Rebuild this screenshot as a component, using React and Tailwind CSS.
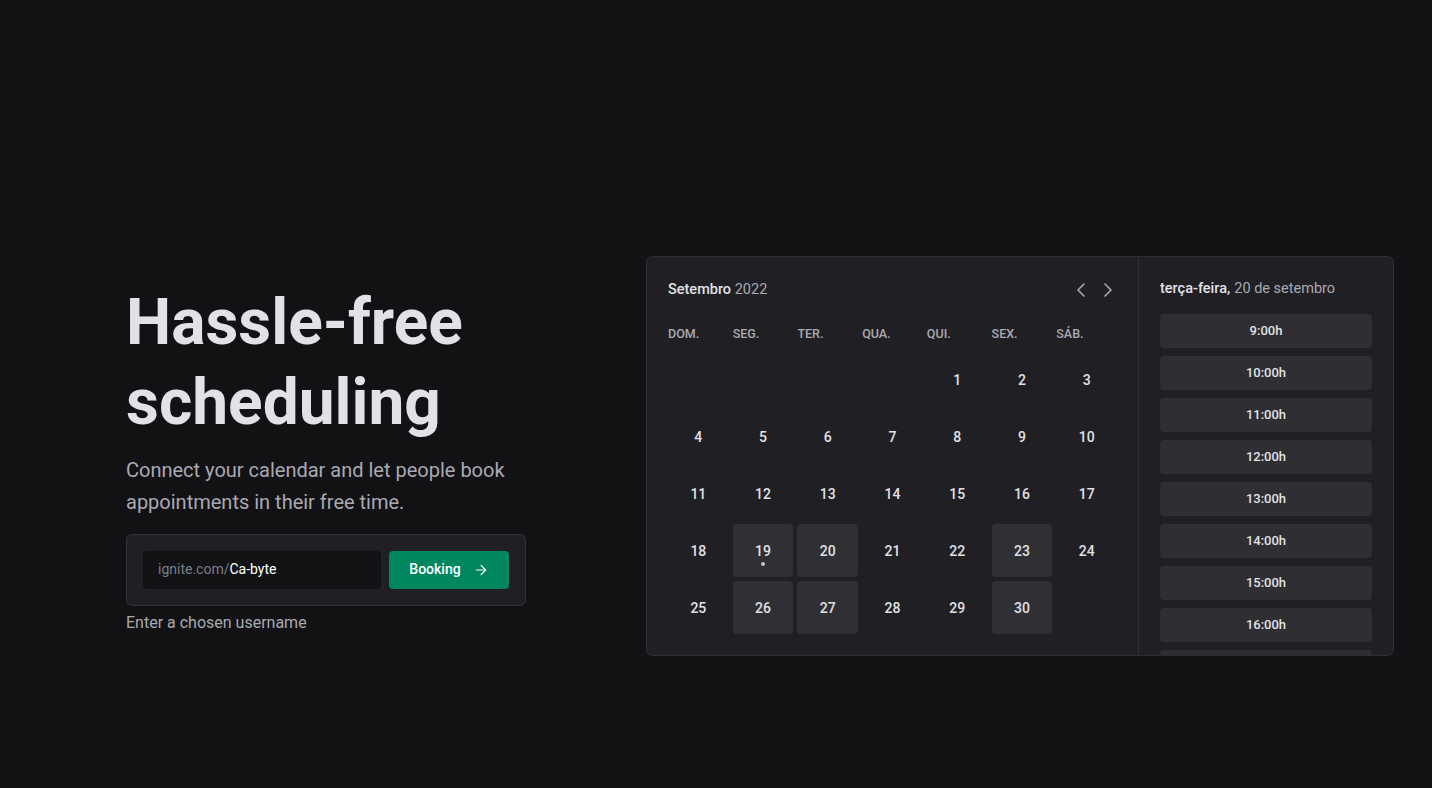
import React from "react";
import { ArrowRight, ChevronLeft, ChevronRight } from "lucide-react";

const weekDays = ["dom.", "seg.", "ter.", "qua.", "qui.", "sex.", "sáb."];

const weeks = [
  [null, null, null, null, 1, 2, 3],
  [4, 5, 6, 7, 8, 9, 10],
  [11, 12, 13, 14, 15, 16, 17],
  [18, 19, 20, 21, 22, 23, 24],
  [25, 26, 27, 28, 29, 30, null],
];

const available = [19, 20, 23, 26, 27, 30];

const hours = ["9:00h", "10:00h", "11:00h", "12:00h", "13:00h", "14:00h", "15:00h", "16:00h"];

function DayCell({ day }) {
  if (day === null) return <div className="h-[53px]" />;
  const active = available.includes(day);
  return (
    <div
      className={
        "relative flex h-[53px] items-center justify-center rounded-[4px] text-[14px] font-medium text-[#e1e1e6] " +
        (active ? "bg-[#2f2f34]" : "")
      }
    >
      <span className="translate-y-[1px]">{day}</span>
      {day === 19 && (
        <span className="absolute left-1/2 top-[38px] h-[4px] w-[4px] -translate-x-1/2 rounded-full bg-[#c4c4cc]" />
      )}
    </div>
  );
}

function Calendar() {
  return (
    <div className="flex h-[400px] w-[748px] shrink-0 overflow-hidden rounded-[6px] border border-[#2c2c31] bg-[#202024]">
      <div className="flex w-[491px] shrink-0 flex-col px-[21px] pt-[21px]">
        <div className="flex h-[24px] items-center justify-between">
          <div className="text-[14.5px] font-medium text-[#e1e1e6]">
            Setembro <span className="font-normal text-[#a9a9b2]">2022</span>
          </div>
          <div className="mr-[-3px] flex items-center gap-[3px] text-[#a9a9b2]">
            <ChevronLeft size={24} strokeWidth={1.6} />
            <ChevronRight size={24} strokeWidth={1.6} />
          </div>
        </div>
        <div className="mt-[22px] grid h-[20px] grid-cols-7 gap-x-1">
          {weekDays.map((d) => (
            <div key={d} className="flex items-center text-[12.5px] font-medium uppercase text-[#a9a9b2]">
              {d}
            </div>
          ))}
        </div>
        <div className="mt-[9px] grid grid-cols-7 gap-1">
          {weeks.flat().map((day, i) => (
            <DayCell key={i} day={day} />
          ))}
        </div>
      </div>
      <div className="flex flex-1 flex-col border-l border-[#2e2e33] pl-[21px] pr-[21px] pt-[21px]">
        <div className="flex h-[24px] items-center text-[14.5px] font-medium text-[#e1e1e6]">
          terça-feira,<span className="ml-1 font-normal text-[#a9a9b2]">20 de setembro</span>
        </div>
        <div className="mt-[11px] flex flex-col gap-2 pt-[3px]">
          {hours.map((h) => (
            <div
              key={h}
              className="flex h-[34px] shrink-0 items-center justify-center rounded-[4px] bg-[#2e2e33] text-[13px] font-medium text-[#e1e1e6]"
            >
              {h}
            </div>
          ))}
          <div className="h-[34px] shrink-0 rounded-[4px] bg-[#2e2e33]" />
        </div>
      </div>
    </div>
  );
}

export default function App() {
  return (
    <div
      className="flex h-[788px] w-full items-center overflow-hidden bg-[#121214] pl-[126px] pt-[124px]"
      style={{ fontFamily: "Roboto, 'Liberation Sans', sans-serif" }}
    >
      <div className="flex items-center gap-10">
        <div className="flex w-[480px] shrink-0 flex-col pt-[5px]">
          <h1 className="text-[64px] font-bold leading-[80px] text-[#e1e1e6]">
            Hassle-free
            <br />
            scheduling
          </h1>
          <p className="mt-[11px] text-[20px] leading-[32px] text-[#a9a9b2]">
            Connect your calendar and let people book
            <br />
            appointments in their free time.
          </p>
          <div className="mt-4 flex w-[400px] gap-2 rounded-[6px] border border-[#323238] bg-[#202024] p-4">
            <div className="flex h-[38px] flex-1 items-center rounded-[4px] bg-[#121214] px-[15px] text-[14px]">
              <span className="text-[#7c7c8a]">ignite.com/</span>
              <span className="text-white">Ca-byte</span>
            </div>
            <button className="flex h-[38px] w-[120px] items-center justify-center gap-3 rounded-[4px] bg-[#00875f] text-[14px] font-medium text-white">
              Booking
              <ArrowRight size={16} strokeWidth={1.75} />
            </button>
          </div>
          <p className="mt-1 text-[16px] leading-[25px] text-[#a9a9b2]">Enter a chosen username</p>
        </div>
        <Calendar />
      </div>
    </div>
  );
}
